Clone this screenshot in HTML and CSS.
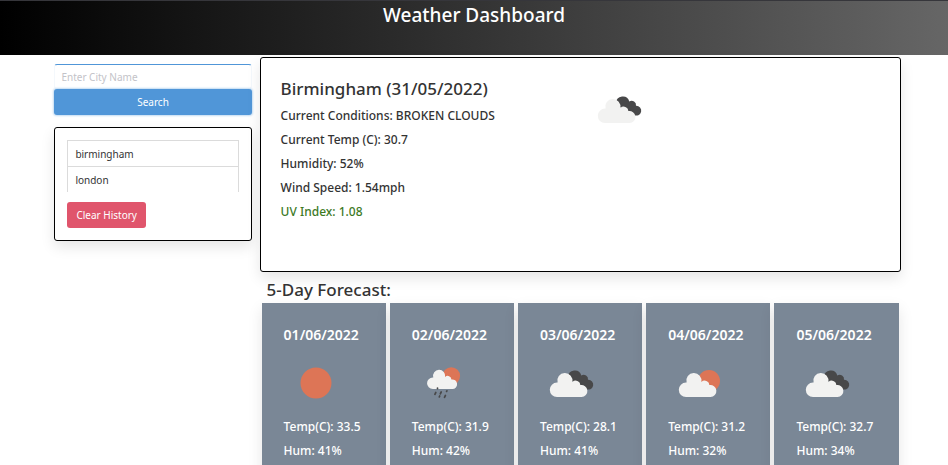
FILE: index.html
```html
<!DOCTYPE html>
<html lang="en">
<head>
<meta charset="utf-8">
<meta name="viewport" content="width=device-width, initial-scale=1">
<title>Weather Dashboard</title>
<link rel="stylesheet" href="styles.css">
</head>
<body>
<svg class="defs" aria-hidden="true">
  <symbol id="cloud" viewBox="0 0 64 64">
    <path fill="#f2f2f1" d="M17 46a7.2 7.2 0 0 1 0-14.4h.6A7.6 7.6 0 1 1 32.400 31A4.600 4.600 0 0 1 40.300 34.100A6 6 0 1 1 41.500 46Z"/>
  </symbol>
  <symbol id="broken" viewBox="0 0 64 64">
    <path fill="#484849" d="M28 26A6.800 6.800 0 0 1 41.300 24.400A4.400 4.400 0 0 1 48 28.800A4.900 4.900 0 1 1 46 38L38 36Z"/>
    <use href="#cloud" width="64" height="64"/>
  </symbol>
  <symbol id="partly" viewBox="0 0 64 64">
    <circle cx="41" cy="30" r="11" fill="#dd7556"/>
    <use href="#cloud" x="1" width="64" height="64"/>
  </symbol>
  <symbol id="clear" viewBox="0 0 64 64">
    <circle cx="32" cy="32" r="15.500" fill="#dd7556"/>
  </symbol>
  <symbol id="rain" viewBox="0 0 64 64">
    <circle cx="39.300" cy="25" r="8.800" fill="#dd7556"/>
    <use href="#cloud" width="64" height="64" transform="translate(7.200 1.200) scale(.8)"/>
    <path stroke="#484849" stroke-width="1.700" stroke-linecap="round" d="M25.500 37v.6M23.800 41.500l-.9 1.800M29.200 41l-.9 1.800M34.900 39.800l-.3.600M27.700 45l-.4.900M33.400 44.500l-.9 1.800"/>
  </symbol>
</svg>

<header class="banner"><h1>Weather Dashboard</h1></header>

<main class="dashboard">
  <aside class="sidebar">
    <form class="search">
      <input class="city" type="text" placeholder="Enter City Name" aria-label="City name">
      <button class="button primary" type="button">Search</button>
    </form>
    <section class="panel history" aria-label="Search history">
      <ul class="cities">
        <li>birmingham</li>
        <li>london</li>
      </ul>
      <button class="button danger" type="button">Clear History</button>
    </section>
  </aside>

  <div class="content">
    <section class="panel current">
      <div>
        <h2>Birmingham (31/05/2022)</h2>
        <p>Current Conditions: BROKEN CLOUDS</p>
        <p>Current Temp (C): 30.7</p>
        <p>Humidity: 52%</p>
        <p>Wind Speed: 1.54mph</p>
        <p class="uv">UV Index: 1.08</p>
      </div>
      <svg class="icon" role="img" aria-label="Broken clouds"><use href="#broken"/></svg>
    </section>

    <h2 class="forecast-title">5-Day Forecast:</h2>
    <section class="forecast">
      <article class="day">
        <h3>01/06/2022</h3>
        <svg class="icon" aria-hidden="true"><use href="#clear"/></svg>
        <p>Temp(C): 33.5</p>
        <p>Hum: 41%</p>
      </article>
      <article class="day">
        <h3>02/06/2022</h3>
        <svg class="icon" aria-hidden="true"><use href="#rain"/></svg>
        <p>Temp(C): 31.9</p>
        <p>Hum: 42%</p>
      </article>
      <article class="day">
        <h3>03/06/2022</h3>
        <svg class="icon" aria-hidden="true"><use href="#broken"/></svg>
        <p>Temp(C): 28.1</p>
        <p>Hum: 41%</p>
      </article>
      <article class="day">
        <h3>04/06/2022</h3>
        <svg class="icon" aria-hidden="true"><use href="#partly"/></svg>
        <p>Temp(C): 31.2</p>
        <p>Hum: 32%</p>
      </article>
      <article class="day">
        <h3>05/06/2022</h3>
        <svg class="icon" aria-hidden="true"><use href="#broken"/></svg>
        <p>Temp(C): 32.7</p>
        <p>Hum: 34%</p>
      </article>
    </section>
  </div>
</main>
</body>
</html>
```
FILE: styles.css
```css
* {
  box-sizing: border-box;
  margin: 0;
  padding: 0;
}

body {
  display: flex;
  flex-direction: column;
  min-height: 100vh;
  background: #fff;
  color: #333;
  font: 500 12px/24px "Noto Sans", "Open Sans", sans-serif;
}

.defs {
  position: absolute;
  width: 0;
  height: 0;
}

.banner {
  padding-bottom: 26px;
  border-top: 1px solid #36363b;
  background: linear-gradient(to right, #000, #666);
  color: #fff;
  text-align: center;
}

h1 {
  font-size: 19px;
  font-weight: 500;
  line-height: 28px;
}

.dashboard {
  flex: 1;
  display: grid;
  grid-template-columns: 4fr 13fr;
  gap: 8px;
  margin: 0 5%;
  padding: 2px 0 0 7px;
}

.sidebar {
  padding-top: 7px;
}

.search {
  display: flex;
  flex-direction: column;
  margin-bottom: 12px;
}

.city {
  height: 25px;
  padding: 0 6px;
  border: 1px solid #f4f8fc;
  border-top-color: #5096d8;
  border-radius: 3px;
  color: #333;
  font: 400 10px/16px "Noto Sans", "Open Sans", sans-serif;
}

.city::placeholder {
  color: #c3c3c8;
}

.button {
  height: 26px;
  border: 0;
  border-radius: 3px;
  color: #fff;
  font: 400 10px/16px "Noto Sans", "Open Sans", sans-serif;
}

.primary {
  background: #5096d8;
  box-shadow: 0 0 2px 1px #c3dcf3;
}

.danger {
  padding: 0 9px;
  background: #e0556c;
}

.panel {
  border: 1px solid #000;
  border-radius: 3px;
  background: #fff;
  box-shadow: 0 6px 14px rgba(10, 10, 10, .1);
}

.history {
  padding: 12px;
}

.cities {
  margin-bottom: 10px;
  border: 1px solid #dbdbdb;
  border-bottom: 0;
  list-style: none;
  font-size: 10px;
  font-weight: 400;
}

.cities li {
  padding: 1px 7px 0;
}

.cities li + li {
  border-top: 1px solid #dbdbdb;
}

.content {
  display: flex;
  flex-direction: column;
}

.current {
  display: grid;
  grid-template-columns: 1fr 1fr;
  gap: 16px;
  padding: 19px 20px 47px;
}

h2 {
  font-size: 17px;
  font-weight: 500;
}

.current h2 {
  margin-bottom: 3px;
}

.uv {
  color: #3d7a1f;
}

.icon {
  display: block;
  width: 64px;
  height: 64px;
}

.forecast-title {
  padding: 6px 7px 1px;
}

.forecast {
  flex: 1;
  display: grid;
  grid-template-columns: repeat(5, 1fr);
  gap: 4px;
  padding: 0 2px;
}

.day {
  padding: 20px 10px 12px 22px;
  background: #7a8796;
  box-shadow: 0 6px 14px rgba(10, 10, 10, .1);
  color: #fff;
  font-weight: 500;
}

.day h3 {
  margin-bottom: 4px;
  font-size: 14px;
  font-weight: 600;
}
```
